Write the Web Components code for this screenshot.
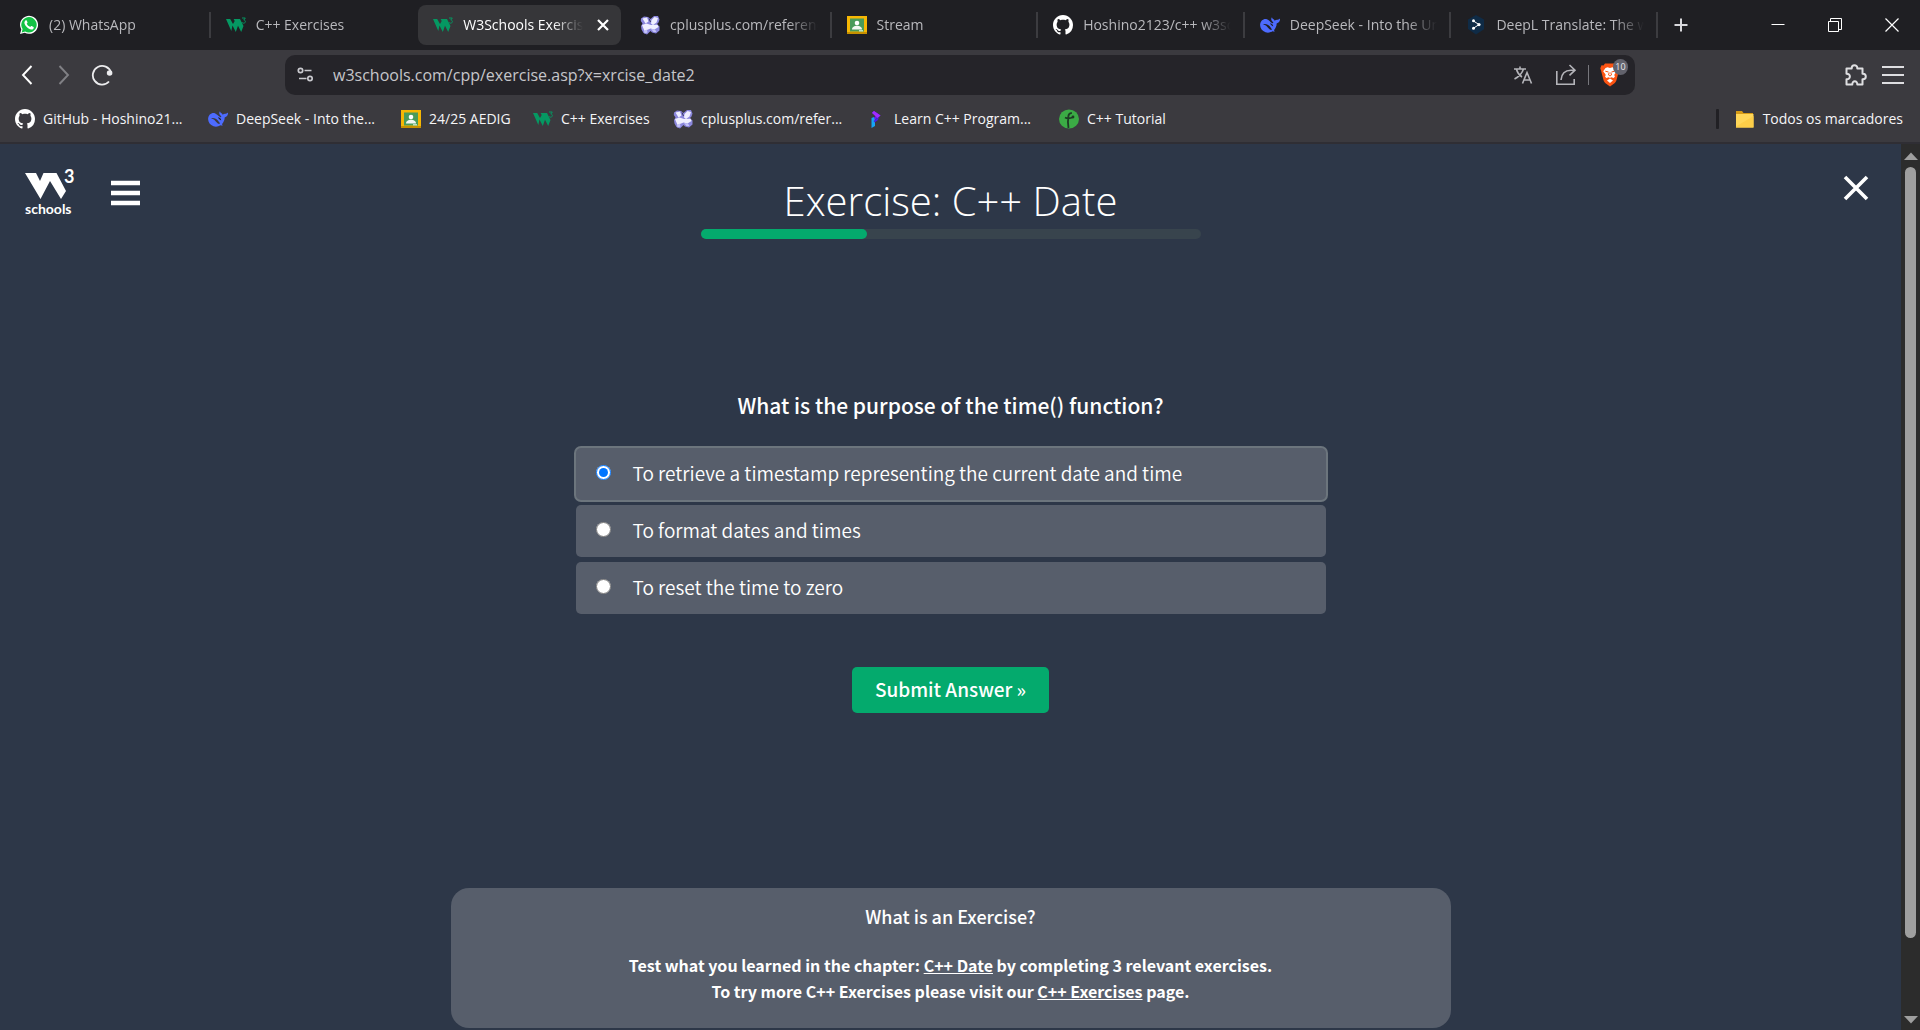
<!DOCTYPE html>
<html lang="en">
<head>
<meta charset="utf-8">
<title>W3Schools Exercise</title>
<style>
  html, body { height: 100%; margin: 0; }
  body { background: #2d3748; overflow: hidden; }
</style>
</head>
<body>
<browser-window></browser-window>

<script>
const ICONS = {
  whatsapp: ['0 0 20 20', '<path d="M1 19l1.300-4.600A9 9 0 1 1 5.700 17.700z" fill="#fff"/><path d="M2.700 17.400l.9-3.300A7.700 7.700 0 1 1 6.200 16.500z" fill="#12c244"/><path d="M6.400 5.500c.5-.5 1-.4 1.300.1l.8 1.700c.1.300 0 .6-.8 1.500.8 1.500 1.900 2.500 3.500 3.200.9-1 1.100-1.200 1.500-1l1.800.9c.5.300.3 1.700-.6 2.300-1 .7-2.800.4-4.800-.9-1.800-1.200-3.600-3.500-3.700-5.200 0-1.200.5-2.100 1-2.600z" fill="#fff"/>'],
  w3: ['0 0 20 20', '<path d="M0 4h4.200l2.800 5 1.700-3-1.100-2H14l3.500 7-2.300 6L12 10.700 9.800 17 6.500 10.500 5.300 16z" fill="#059862"/><path d="M16 3h3.300l-1.500 2c2.400.3 1.800 3.200-.2 3.200-1 0-1.600-.4-1.800-1" fill="none" stroke="#059862" stroke-width="1"/>'],
  cpp: ['0 0 20 20', '<path d="M1 3.500L4 1.500l4 .5 2.500 2L14 1h4l1.500 3.500-1 3L17 9l2.500 2.500v4L16 18.500l-4-1-1.500-1.500L7 19.500 3.500 18 1.500 14.500 1 11l1.500-2.500L.8 6z" fill="#8a86dc"/><path d="M2.500 3.500L7 2.500l1.500 4L5.500 8.500z M11.500 5l3-3 3.500 1-1.500 4.500-3.500 2.500-2-1.500z M2 10L6.500 8.500l4.500 1.500 6.500-.3 1 2.300-4 2.500-4-1-6 2.500z" fill="#efefff"/><path d="M11 14l4 .5 1.500 2.500h-3z M4 16l3-1.500.5 3-3 1z" fill="#c3c3f8"/><path d="M9 3.500l1.500 3.500" stroke="#36385f" stroke-width="1"/>'],
  classroom: ['0 0 20 20', '<path d="M0 1h20v18H0z" fill="#f6b704"/><path d="M0 17h20v2H0z" fill="#c79100"/><path d="M3 3.500h14v13H3z" fill="#4a9b5a"/><circle cx="10" cy="8" r="2.300" fill="#fff"/><path d="M5 14.500c0-5 10-5 10 0z" fill="#f1f7f1"/><path d="M12 15h4v1.500h-4z" fill="#bde0c4"/>'],
  github: ['0 0 16 16', '<path fill="#fff" fill-rule="evenodd" d="M8 0C3.580 0 0 3.580 0 8c0 3.540 2.290 6.530 5.470 7.590.4.070.55-.17.55-.38 0-.19-.01-.82-.01-1.490-2.010.37-2.530-.49-2.690-.94-.09-.23-.48-.94-.82-1.130-.28-.15-.68-.52-.01-.53.63-.01 1.080.58 1.230.82.72 1.210 1.870.87 2.330.66.070-.52.28-.87.51-1.070-1.780-.2-3.640-.89-3.640-3.950 0-.87.31-1.590.82-2.150-.08-.2-.36-1.020.08-2.120 0 0 .67-.21 2.200.82.64-.18 1.320-.27 2-.27s1.360.09 2 .27c1.530-1.040 2.200-.82 2.200-.82.44 1.100.16 1.920.08 2.120.51.56.82 1.270.82 2.150 0 3.070-1.870 3.750-3.650 3.950.29.25.54.73.54 1.480 0 1.070-.01 1.930-.01 2.200 0 .21.15.46.55.38A8.010 8.010 0 0 0 16 8c0-4.420-3.580-8-8-8z"/>'],
  deepseek: ['0 0 24 24', '<path fill="#4d6bfe" d="M23.700 4.500c-.3-.1-.4.100-.5.200-.8.800-1.500 1-2.600.9-1.200 0-2.200.3-3 1.200-.2-1.100-.8-1.700-1.800-2.100-.6-.3-1.100-.6-1.200-1.500-.1-.4-.5-.4-.7 0-1.100 2 .2 4.200 1.900 5.400.2.200.3.300.2.500-.3.900-.5 1-1.100.7C12.500 8.600 11 6.300 8.300 5c-4-1.100-8 1.900-8.200 6.900C0 16 2.600 19.400 6.600 20.800c3 1 6 .4 8.300-1.200.7.300 3.600.8 2.600-.5l-.8-.9c2-2.400 3.300-4.800 3.300-8 2.600-.9 4.100-2.800 4-5.200 0-.3-.1-.5-.3-.5zM12.100 17.600c-3.400-2.400-3.800-5.400-8.500-6.400 3.200-1.100 6.300.4 8.300 2.700.9 1.100 1.600 2.400 2.600 3.200-.7.800-1.500.900-2.400.5z"/><path d="M11.800 10.500c1.800-1.200 3.600.8 4.100 3-2 .2-2.300-2.200-4.100-3z" fill="#202024"/>'],
  deepl: ['0 0 20 20', '<path d="M10 0l8 4.600v9.600L10 19.500 2 14V4.600z" fill="#0f2b46"/><path d="M7.500 6l5.500 3.600-5.500 3.600" stroke="#fff" stroke-width="1" fill="none"/><g fill="#fff"><circle cx="7.500" cy="5.800" r="1.500"/><circle cx="13" cy="9.600" r="1.600"/><circle cx="7.500" cy="13.300" r="1.500"/></g>'],
  program: ['0 0 20 20', '<path d="M6 3.500L8 2l6.500 4.500-7 5.500V9.500L9.500 7z" fill="#6b16f0"/><path d="M8 2l6.500 4.500-3 2.500L6 4z" fill="#a02cff"/><path d="M5.500 9L8 8l1 4v5l-3.500 2z" fill="#16a4f4"/><path d="M7.500 12L13 8l-1 3-3.500 2.500z" fill="#4a20e8"/>'],
  tutorial: ['0 0 20 20', '<ellipse cx="10" cy="10" rx="10" ry="9.600" fill="#3bab45"/><path d="M9.500 19c-.6-4-.8-8-.1-12 .3-1.900 1.400-3 3.500-2.800M6 8.500c2 1 6 .6 8.500-.5" fill="none" stroke="#1d3b24" stroke-width="1.800"/><circle cx="14" cy="8" r="1.400" fill="#1d3b24"/>'],
  folder: ['0 0 20 20', '<path d="M1 2h6l1.500 2H18v3H1z" fill="#d69b16"/><path d="M1 5h17.500v13.500H1z" fill="#ffd759"/><path d="M1 17.500L18.500 7v11.500H1z" fill="#fdce48"/>'],
  close: ['0 0 20 20', '<path d="M5 5l10 10M15 5L5 15" stroke="#fff" stroke-width="2.200" fill="none"/>'],
  plus: ['0 0 20 20', '<path d="M10 3.500v13M3.500 10h13" stroke="#d8d8dc" stroke-width="2" fill="none"/>'],
  minimize: ['0 0 20 20', '<path d="M3.500 9.500h13" stroke="#fff" fill="none"/>'],
  restore: ['0 0 20 20', '<path d="M3.500 6.500h10v10h-10zM5.500 6V3.500h11v11H14" stroke="#fff" fill="none"/>'],
  exit: ['0 0 20 20', '<path d="M3.500 3.500l13 13M16.500 3.500l-13 13" stroke="#fff" stroke-width="1.200" fill="none"/>'],
  back: ['0 0 20 20', '<path d="M14.500 1L6 10l8.500 9" stroke="#fff" stroke-width="1.900" fill="none"/>'],
  forward: ['0 0 20 20', '<path d="M5.500 1l8.500 9-8.500 9" stroke="#808085" stroke-width="1.900" fill="none"/>'],
  reload: ['0 0 22 22', '<path d="M18 17.500A9.300 9.300 0 1 1 20 8.500" stroke="#ececee" stroke-width="1.800" fill="none"/><circle cx="18.600" cy="9" r="2.800" fill="#ececee"/>'],
  tune: ['0 0 20 20', '<g fill="none" stroke="#c9c9ce" stroke-width="1.700"><circle cx="4.500" cy="5.500" r="2.200"/><path d="M8.500 5.500h7M3 13.500h7.500"/><circle cx="14" cy="13.500" r="2.200"/></g>'],
  translate: ['0 0 20 20', '<g fill="none" stroke="#b4b4b9" stroke-width="1.600"><path d="M1 4h12M7 1.500V4M10.500 4C9 8.500 5.500 12 1.500 14M3.500 4.500c1 3.500 3 6 5.500 7.500M9.500 18.500L14 7.500l4.500 11M11 15h6"/></g>'],
  share: ['0 0 22 22', '<g fill="none" stroke="#b4b4b9" stroke-width="1.600"><path d="M1.800 7v13.200h17.400V15M6 16C6.500 9.500 10 6.200 16 6.200H20M14.500 1l5.500 5.200-5.500 5.200"/></g>'],
  brave: ['0 0 20 24', '<path d="M5 .5h10l1.500 2 2-.2 1.200 3-.7 2.200L16.500 17c-.4 1.500-1 2.400-2 3.200L10 23.500l-4.500-3.300c-1-.8-1.600-1.700-2-3.200L1 7.500.3 5.300l1.200-3 2 .2z" fill="#fb5413"/><path d="M10 5l2.500-.7 2 .8 2.300 3.200-2.200 2.900c-.5.8-.2 1.400.4 2.200l-1.300 1.500-2.500-.6-1.200.6-1.200-.6-2.500.6L5 13.400c.6-.8.9-1.400.4-2.200L3.200 8.300l2.300-3.200 2-.8z" fill="#fff"/><path d="M10 15.500l3 2-3 2.400-3-2.400z" fill="#fff"/><path d="M5.300 8.200l3.200.8M14.700 8.200l-3.200.8M9.200 9.500L8.500 12l1.500 1 1.500-1-.7-2.500" stroke="#fb5413" stroke-width="1" fill="none"/>'],
  puzzle: ['0 0 24 24', '<path d="M2.500 5.500h5.200V5a2.800 2.800 0 0 1 5.600 0v.5h5.200v5.200h.5a2.800 2.800 0 0 1 0 5.600h-.5v5.200h-5.200c.3-4.300-5.300-4.300-5 0H2.500v-5.200c4.500.2 4.500-5.700 0-5.600z" fill="none" stroke="#dedee1" stroke-width="2" stroke-linejoin="round"/>'],
  lines: ['0 0 22 20', '<path d="M0 2h22M0 10h22M0 18h22" stroke="#dedee1" stroke-width="2"/>'],
  burger: ['0 0 30 26', '<path d="M0 3h29M0 13h29M0 23h29" stroke="#fff" stroke-width="4.600"/>'],
  dismiss: ['0 0 26 26', '<path d="M2 2l22 22M24 2L2 24" stroke="#fff" stroke-width="3.600" fill="none"/>'],
  mark: ['0 0 42 28', '<path d="M0 1h11l4 8 3.500-8h13L41 19l-5 8-11-18-9.500 18z" fill="#fff"/>'],
  up: ['0 0 14 8', '<path d="M0 8l7-7.500L14 8z" fill="#9f9f9f"/>'],
  down: ['0 0 14 8', '<path d="M0 0h14L7 7.500z" fill="#9f9f9f"/>']
};

const RESET = `*{box-sizing:border-box}button{background:none;border:0;padding:0;color:inherit;font:inherit;display:flex;align-items:center;justify-content:center}a{color:inherit}`;

/* Shared base: renders a style block and markup into an open shadow root. */
class Base extends HTMLElement {
  connectedCallback() {
    if (this.shadowRoot) return;
    const t = document.createElement('template');
    t.innerHTML = `<style>${RESET}${this.css()}</style>${this.html()}`;
    this.attachShadow({ mode: 'open' }).append(t.content.cloneNode(true));
  }
}

customElements.define('ui-icon', class extends Base {
  css() { return `:host{display:block;flex:none;width:20px;height:20px}svg{display:block;width:100%;height:100%}`; }
  html() { const [box, art] = ICONS[this.getAttribute('name')]; return `<svg viewBox="${box}" aria-hidden="true">${art}</svg>`; }
});

customElements.define('browser-tab', class extends Base {
  css() { return `
    :host{display:flex;flex:1;min-width:0;align-items:center;height:40px;color:#b9b9bd}
    button{width:calc(100% - 4px);height:40px;padding:0 8px 0 15px;gap:10px;justify-content:flex-start;border-radius:8px;text-align:left}
    .label{flex:1;min-width:0;overflow:hidden;white-space:nowrap;line-height:20px;mask-image:linear-gradient(90deg,#000 calc(100% - 30px),transparent)}
    :host([active]){color:#fff;margin:0 2px 0 3px}
    :host([active]) button{width:calc(100% - 2px);background:#363639}
    :host([divided]){border-right:2px solid transparent;border-image:linear-gradient(transparent 20%,#3c3c40 20% 80%,transparent 80%) 1}`; }
  html() { return `<button role="tab"><ui-icon name="${this.getAttribute('icon')}"></ui-icon><span class="label"><slot></slot></span>${this.hasAttribute('active') ? '<ui-icon name="close"></ui-icon>' : ''}</button>`; }
});

customElements.define('tab-strip', class extends Base {
  css() { return `
    :host{display:flex;align-items:center;height:50px;background:#1f1f23;padding-left:4px}
    .tabs{display:flex;flex:1;min-width:0}
    .new{width:46px;height:40px}
    .win{display:flex;margin-left:45px}
    .win button{width:57px;height:40px}`; }
  html() { return `
    <div class="tabs" role="tablist">
      <browser-tab icon="whatsapp" divided>(2) WhatsApp</browser-tab>
      <browser-tab icon="w3">C++ Exercises</browser-tab>
      <browser-tab icon="w3" active>W3Schools Exercise</browser-tab>
      <browser-tab icon="cpp" divided>cplusplus.com/reference</browser-tab>
      <browser-tab icon="classroom" divided>Stream</browser-tab>
      <browser-tab icon="github" divided>Hoshino2123/c++ w3schools</browser-tab>
      <browser-tab icon="deepseek" divided>DeepSeek - Into the Unknown</browser-tab>
      <browser-tab icon="deepl" divided>DeepL Translate: The world</browser-tab>
    </div>
    <button class="new" aria-label="New tab"><ui-icon name="plus"></ui-icon></button>
    <div class="win">
      <button aria-label="Minimize"><ui-icon name="minimize"></ui-icon></button>
      <button aria-label="Restore"><ui-icon name="restore"></ui-icon></button>
      <button aria-label="Close"><ui-icon name="exit"></ui-icon></button>
    </div>`; }
});

customElements.define('tool-bar', class extends Base {
  css() { return `
    :host{display:flex;align-items:center;height:50px;padding:0 16px 0 17px;background:#3b3a3f}
    .nav{display:flex;align-items:center;width:268px;gap:17px}
    .nav ui-icon[name=reload]{width:22px;height:22px}
    .bar{display:flex;align-items:center;flex:1;height:40px;padding:0 15px 0 11px;background:#252429;border-radius:10px;gap:17px}
    input{flex:1;min-width:0;background:none;border:0;outline:0;padding:0;font:inherit;font-size:16px;color:#c6c6ca}
    .tools{display:flex;align-items:center;gap:22px}
    .sep{width:1px;height:20px;background:#77777c;margin:0 -11px}
    ui-icon[name=share]{width:22px;height:22px}
    .brave{position:relative}
    .brave ui-icon{width:20px;height:24px}
    .badge{position:absolute;left:13px;top:-4px;width:15px;height:16px;border-radius:8px;background:#62626c;color:#e9e9ee;font-size:9px;line-height:16px;text-align:center}
    .right{display:flex;align-items:center;justify-content:flex-end;width:269px;gap:14px}
    .right ui-icon{width:22px}
    .right ui-icon[name=puzzle]{width:24px;height:24px}`; }
  html() { return `
    <div class="nav">
      <button aria-label="Back"><ui-icon name="back"></ui-icon></button>
      <button aria-label="Forward"><ui-icon name="forward"></ui-icon></button>
      <button aria-label="Reload"><ui-icon name="reload"></ui-icon></button>
    </div>
    <div class="bar">
      <button aria-label="Site settings"><ui-icon name="tune"></ui-icon></button>
      <input type="text" aria-label="Address" value="w3schools.com/cpp/exercise.asp?x=xrcise_date2">
      <div class="tools">
        <button aria-label="Translate"><ui-icon name="translate"></ui-icon></button>
        <button aria-label="Share"><ui-icon name="share"></ui-icon></button>
        <span class="sep"></span>
        <button class="brave" aria-label="Shields"><ui-icon name="brave"></ui-icon><span class="badge">10</span></button>
      </div>
    </div>
    <div class="right">
      <button aria-label="Extensions"><ui-icon name="puzzle"></ui-icon></button>
      <button aria-label="Menu"><ui-icon name="lines"></ui-icon></button>
    </div>`; }
});

customElements.define('book-mark', class extends Base {
  css() { return `:host{display:block;flex:none}a{display:flex;align-items:center;gap:8px;text-decoration:none;white-space:nowrap;line-height:20px}:host([long]){width:173px}:host([mid]){width:120px}:host([short]){width:112px}`; }
  html() { return `<a href="#"><ui-icon name="${this.getAttribute('icon')}"></ui-icon><slot></slot></a>`; }
});

customElements.define('bookmark-bar', class extends Base {
  css() { return `
    :host{display:flex;align-items:center;gap:20px;height:44px;padding:0 17px 4px 15px;background:#3b3a3f;border-bottom:2px solid #2f2e34;color:#f5f5f7}
    .all{display:flex;align-items:center;gap:16px;margin-left:auto}
    .all i{width:3px;height:20px;border-radius:1px;background:#212024}`; }
  html() { return `
    <book-mark icon="github" long>GitHub - Hoshino21...</book-mark>
    <book-mark icon="deepseek" long>DeepSeek - Into the...</book-mark>
    <book-mark icon="classroom" short>24/25 AEDIG</book-mark>
    <book-mark icon="w3" mid>C++ Exercises</book-mark>
    <book-mark icon="cpp" long>cplusplus.com/refer...</book-mark>
    <book-mark icon="program" long>Learn C++ Program...</book-mark>
    <book-mark icon="tutorial" mid>C++ Tutorial</book-mark>
    <div class="all"><i></i><book-mark icon="folder">Todos os marcadores</book-mark></div>`; }
});

customElements.define('site-logo', class extends Base {
  css() { return `
    :host{display:block;width:50px;color:#fff}
    a{display:block;text-decoration:none}
    .top{display:flex;align-items:flex-start}
    ui-icon{width:42px;height:28px;margin-top:4px}
    sup{font:700 18px/16px Lato,sans-serif;margin-left:-3px}
    .name{display:block;font:700 14px/14px Lato,sans-serif;margin-top:2px}`; }
  html() { return `<a href="#"><span class="top"><ui-icon name="mark"></ui-icon><sup>3</sup></span><span class="name">schools</span></a>`; }
});

customElements.define('progress-line', class extends Base {
  css() { return `:host{display:block;height:10px;border-radius:5px;background:#38444d}div{width:33.300%;height:10px;border-radius:5px;background:#04aa6d}`; }
  html() { return `<div role="progressbar" aria-valuenow="33" aria-label="Progress"></div>`; }
});

customElements.define('answer-option', class extends Base {
  css() { return `
    :host{display:block}
    label{display:flex;align-items:center;height:52px;padding:0 20px 2px;border-radius:5px;background:#575e6b;font-size:19px;line-height:28px;font-weight:350}
    input{width:15px;height:15px;margin:0 22px 2px 0}
    :host([selected]) label{box-shadow:0 0 0 2px #6c757d}`; }
  html() { return `<label><input type="radio" name="answer" ${this.hasAttribute('selected') ? 'checked' : ''}><span><slot></slot></span></label>`; }
});

customElements.define('exercise-form', class extends Base {
  css() { return `
    :host{display:block;width:750px;max-width:100%;margin:0 auto}
    form{display:flex;flex-direction:column;align-items:center}
    h2{margin:0 0 27px;font-size:21px;line-height:32px;font-weight:500}
    .list{display:flex;flex-direction:column;gap:5px;align-self:stretch}
    button{margin-top:53px;height:46px;padding:0 23px 2px;border-radius:5px;background:#04aa6d;color:#fff;font-size:19px;font-weight:500}`; }
  html() { return `
    <form onsubmit="return false">
      <h2>What is the purpose of the time() function?</h2>
      <div class="list">
        <answer-option selected>To retrieve a timestamp representing the current date and time</answer-option>
        <answer-option>To format dates and times</answer-option>
        <answer-option>To reset the time to zero</answer-option>
      </div>
      <button type="submit">Submit Answer »</button>
    </form>`; }
});

customElements.define('info-card', class extends Base {
  css() { return `
    :host{display:block;width:1000px;max-width:100%;margin:auto auto 0;height:140px;padding:14px 0;border-radius:18px;background:#575e6b;text-align:center}
    h3{margin:0 0 22px;font-size:18px;line-height:28px;font-weight:500}
    p{margin:0;font-size:16px;line-height:26px;font-weight:700}`; }
  html() { return `
    <h3>What is an Exercise?</h3>
    <p>Test what you learned in the chapter: <a href="#">C++ Date</a> by completing 3 relevant exercises.</p>
    <p>To try more C++ Exercises please visit our <a href="#">C++ Exercises</a> page.</p>`; }
});

customElements.define('exercise-page', class extends Base {
  css() { return `
    :host{display:flex;flex-direction:column;flex:1;min-width:0;padding-bottom:2px;background:#2d3748;color:#fff;font-family:"Noto Sans CJK SC","Noto Sans",sans-serif}
    header{display:grid;grid-template-columns:1fr 500px 1fr;padding:24px 25px 0}
    .left{display:flex;gap:36px}
    .left button{height:26px;margin-top:12px}
    ui-icon[name=burger]{width:30px;height:26px}
    h1{margin:7px 0 2px;font:300 40px/52px "Open Sans","Noto Sans",sans-serif;text-align:center;white-space:nowrap}
    .close{justify-self:end;height:26px;margin:7px 7px 0 0}
    ui-icon[name=dismiss]{width:26px;height:26px}
    exercise-form{margin-top:150px}`; }
  html() { return `
    <header>
      <div class="left"><site-logo></site-logo><button aria-label="Menu"><ui-icon name="burger"></ui-icon></button></div>
      <div><h1>Exercise: C++ Date</h1><progress-line></progress-line></div>
      <button class="close" aria-label="Close exercise"><ui-icon name="dismiss"></ui-icon></button>
    </header>
    <exercise-form></exercise-form>
    <info-card></info-card>`; }
});

customElements.define('scroll-rail', class extends Base {
  css() { return `
    :host{display:flex;flex-direction:column;align-items:center;width:19px;padding:8px 0 6px;background:#2c2c2c}
    ui-icon{width:14px;height:8px}
    .track{flex:1;display:flex;flex-direction:column;margin:7px 0 5px}
    .thumb{width:11px;flex:771;border-radius:6px;background:#9f9f9f}
    .rest{flex:73}`; }
  html() { return `<ui-icon name="up"></ui-icon><div class="track"><div class="thumb"></div><div class="rest"></div></div><ui-icon name="down"></ui-icon>`; }
});

customElements.define('browser-window', class extends Base {
  css() { return `
    :host{display:flex;flex-direction:column;height:100vh;font:400 14px/20px "Open Sans","Noto Sans",sans-serif;color:#fff}
    main{display:flex;flex:1;min-height:0}`; }
  html() { return `<tab-strip></tab-strip><tool-bar></tool-bar><bookmark-bar></bookmark-bar><main><exercise-page></exercise-page><scroll-rail></scroll-rail></main>`; }
});
</script>
</body>
</html>
